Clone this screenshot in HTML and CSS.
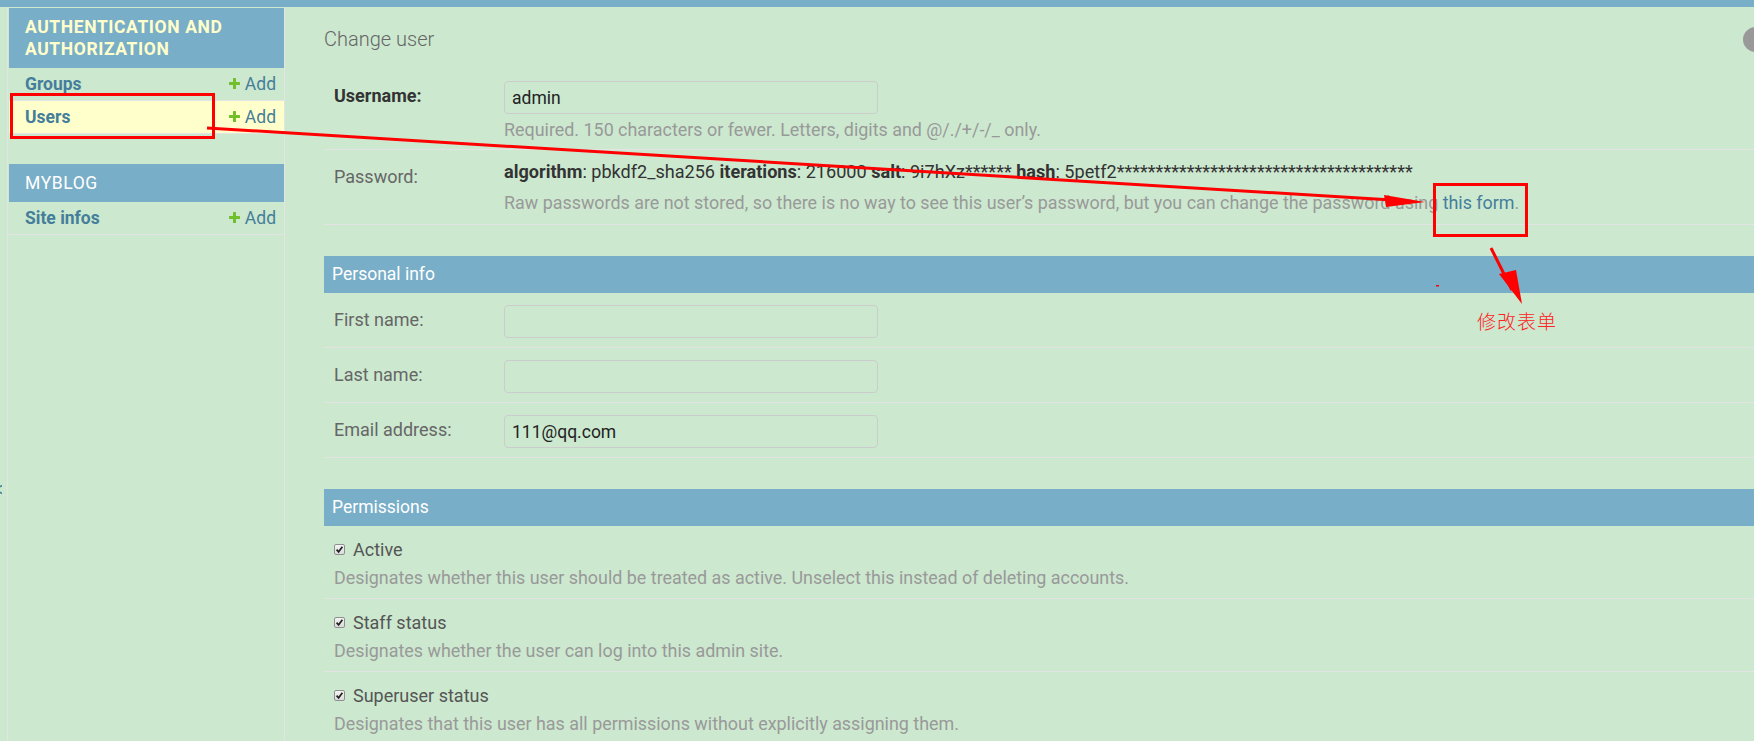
FILE: index.html
```html
<!DOCTYPE html>
<html lang="en">
<head>
    <meta charset="UTF-8">
    <meta name="viewport" content="width=device-width, initial-scale=1.0">
    <title>Change user | Django site admin</title>
    <link rel="stylesheet" href="styles.css">
</head>
<body>
    <div class="topbar"></div>

    <div class="page">
        <div class="sidebar-toggle">
            <svg class="toggle-icon" viewBox="0 0 8 9" width="8" height="9"><path d="M8 0.5 L1 4.5 L8 8.5" fill="none" stroke="#447e9b" stroke-width="1.6"/></svg>
        </div>

        <nav class="nav-sidebar">
            <div class="module current-app">
                <div class="caption">Authentication and Authorization</div>
                <div class="model-row">
                    <a href="#" class="model-link">Groups</a>
                    <a href="#" class="addlink"><svg class="plus" viewBox="0 0 11 11" width="11" height="11"><rect x="4" y="0" width="3" height="11" rx="0.6"/><rect x="0" y="4" width="11" height="3" rx="0.6"/></svg>Add</a>
                </div>
                <div class="model-row current-model">
                    <a href="#" class="model-link">Users</a>
                    <a href="#" class="addlink"><svg class="plus" viewBox="0 0 11 11" width="11" height="11"><rect x="4" y="0" width="3" height="11" rx="0.6"/><rect x="0" y="4" width="11" height="3" rx="0.6"/></svg>Add</a>
                </div>
            </div>

            <div class="module">
                <div class="caption">Myblog</div>
                <div class="model-row">
                    <a href="#" class="model-link">Site infos</a>
                    <a href="#" class="addlink"><svg class="plus" viewBox="0 0 11 11" width="11" height="11"><rect x="4" y="0" width="3" height="11" rx="0.6"/><rect x="0" y="4" width="11" height="3" rx="0.6"/></svg>Add</a>
                </div>
            </div>
        </nav>

        <main class="content">
            <div class="content-head">
                <h1>Change user</h1>
                <a href="#" class="history-link" aria-label="History"></a>
            </div>

            <fieldset class="module">
                <div class="form-row">
                    <label class="required">Username:</label>
                    <div class="field-box">
                        <input type="text" class="text-input" value="admin">
                        <div class="help">Required. 150 characters or fewer. Letters, digits and @/./+/-/_ only.</div>
                    </div>
                </div>
                <div class="form-row password-row">
                    <label>Password:</label>
                    <div class="field-box">
                        <div class="readonly"><strong>algorithm</strong>: pbkdf2_sha256 <strong>iterations</strong>: 216000 <strong>salt</strong>: 9i7hXz****** <strong>hash</strong>: 5petf2**************************************</div>
                        <div class="help">Raw passwords are not stored, so there is no way to see this user’s password, but you can change the password using <a href="#">this form</a>.</div>
                    </div>
                </div>
            </fieldset>

            <fieldset class="module">
                <h2>Personal info</h2>
                <div class="form-row">
                    <label>First name:</label>
                    <div class="field-box"><input type="text" class="text-input" value=""></div>
                </div>
                <div class="form-row">
                    <label>Last name:</label>
                    <div class="field-box"><input type="text" class="text-input" value=""></div>
                </div>
                <div class="form-row">
                    <label>Email address:</label>
                    <div class="field-box"><input type="text" class="text-input" value="111@qq.com"></div>
                </div>
            </fieldset>

            <fieldset class="module">
                <h2>Permissions</h2>
                <div class="form-row check-row">
                    <div class="check-line"><span class="checkbox"><svg viewBox="0 0 9 9" width="9" height="9"><path d="M1.6 4.6 L3.6 6.8 L7.4 1.8" fill="none" stroke="#222" stroke-width="1.7"/></svg></span>Active</div>
                    <div class="help">Designates whether this user should be treated as active. Unselect this instead of deleting accounts.</div>
                </div>
                <div class="form-row check-row">
                    <div class="check-line"><span class="checkbox"><svg viewBox="0 0 9 9" width="9" height="9"><path d="M1.6 4.6 L3.6 6.8 L7.4 1.8" fill="none" stroke="#222" stroke-width="1.7"/></svg></span>Staff status</div>
                    <div class="help">Designates whether the user can log into this admin site.</div>
                </div>
                <div class="form-row check-row">
                    <div class="check-line"><span class="checkbox"><svg viewBox="0 0 9 9" width="9" height="9"><path d="M1.6 4.6 L3.6 6.8 L7.4 1.8" fill="none" stroke="#222" stroke-width="1.7"/></svg></span>Superuser status</div>
                    <div class="help">Designates that this user has all permissions without explicitly assigning them.</div>
                </div>
            </fieldset>
        </main>
    </div>

    <!-- red marks drawn over the screenshot -->
    <svg class="annotations" width="1754" height="741" viewBox="0 0 1754 741">
        <rect x="11.5" y="94.5" width="202" height="43" fill="none" stroke="#f00" stroke-width="3"/>
        <line x1="207" y1="128" x2="1392" y2="200" stroke="#f00" stroke-width="3"/>
        <polygon points="1384,195 1425,202 1386,207" fill="#f00"/>
        <rect x="1434.5" y="184.5" width="92" height="51" fill="none" stroke="#f00" stroke-width="3"/>
        <line x1="1491" y1="248" x2="1512" y2="290" stroke="#f00" stroke-width="3"/>
        <polygon points="1499,274 1516,270 1522,304" fill="#f00"/>
        <rect x="1436" y="285" width="3" height="1.5" fill="#f00"/>
    </svg>
    <div class="annotation-note">修改表单</div>
</body>
</html>
```

FILE: styles.css
```css
:root {
    --primary: #79aec8;
    --body-bg: #cce8cf; /* fond vert "protection des yeux" */
    --link: #447e9b;
    --hairline: #e4e4e4;
    --quiet: #999;
    --label: #666;
    --text: #333;
    --selected-row: #ffc;
    --header-color: #ffc;
    --add-green: #70bf2b;
    --mark: #f00;
}

* {
    box-sizing: border-box;
}

html, body {
    margin: 0;
    padding: 0;
}

body {
    position: relative;
    height: 741px;
    overflow: hidden;
    background-color: var(--body-bg);
    font-family: Roboto, "Liberation Sans", sans-serif;
    color: var(--text);
}

a {
    color: var(--link);
    text-decoration: none;
}

.topbar {
    height: 7px;
    background-color: var(--primary);
}

.page {
    display: flex;
    min-height: 734px;
}

/* bouton de repli, presque hors cadre */
.sidebar-toggle {
    width: 8px;
    flex-shrink: 0;
    border-right: 1px solid var(--hairline);
    overflow: hidden;
}

.toggle-icon {
    display: block;
    margin: 478px 0 0 -6px;
}

.nav-sidebar {
    width: 277px;
    flex-shrink: 0;
    padding: 1px 0 0 1px;
    border-right: 1px solid var(--hairline);
}

.nav-sidebar .module {
    margin-bottom: 30px;
}

.caption {
    background-color: var(--primary);
    color: #fff;
    padding: 8px 16px;
    font-size: 17.5px;
    line-height: 22px;
    letter-spacing: 0.6px;
    text-transform: uppercase;
}

.current-app .caption {
    color: var(--header-color);
    font-weight: 700;
}

.model-row {
    display: flex;
    justify-content: space-between;
    align-items: center;
    padding: 6px 8px 5px 16px;
    line-height: 21px;
    font-size: 17.5px;
    border-bottom: 1px solid var(--hairline);
}

.current-model {
    background-color: var(--selected-row);
}

.model-link {
    font-weight: 700;
}

.addlink {
    display: flex;
    align-items: center;
    gap: 5px;
}

.plus {
    fill: var(--add-green);
    margin-top: -3px;
}

.content {
    flex: 1;
    min-width: 0;
    padding: 20px 0 0 39px;
}

.content-head {
    display: flex;
    justify-content: space-between;
    align-items: center;
    margin-bottom: 17px;
}

h1 {
    margin: 0;
    font-size: 20px;
    font-weight: 300;
    line-height: 25px;
    color: var(--label);
}

.history-link {
    width: 95px;
    height: 25px;
    margin-right: -84px;
    border-radius: 13px;
    background-color: var(--quiet);
}

fieldset.module {
    border: none;
    margin: 0 0 31px;
    padding: 0;
    min-width: 0;
}

fieldset.module h2 {
    margin: 0;
    padding: 8px;
    background-color: var(--primary);
    color: #fff;
    font-size: 17.5px;
    font-weight: 400;
    line-height: 21px;
}

.form-row {
    display: flex;
    padding: 12px 10px 9px;
    border-bottom: 1px solid var(--hairline);
}

.form-row.password-row {
    padding-bottom: 11px;
}

.form-row label {
    width: 170px;
    flex-shrink: 0;
    padding: 5px 10px 0 0;
    font-size: 18px;
    line-height: 20px;
    color: var(--label);
}

.form-row label.required {
    font-weight: 700;
    color: var(--text);
}

.field-box {
    display: flex;
    flex-direction: column;
}

.text-input {
    width: 374px;
    height: 33px;
    padding: 2px 7px;
    border: 1px solid #ccc;
    border-radius: 4px;
    background: transparent;
    font-family: inherit;
    font-size: 17.5px;
    color: #222;
}

.help {
    margin-top: 5px;
    font-size: 17.9px;
    line-height: 21px;
    color: var(--quiet);
    white-space: nowrap;
}

.readonly {
    font-size: 18.1px;
    line-height: 20px;
    color: var(--text);
    white-space: nowrap;
}

.readonly + .help {
    margin-top: 10px;
}

.check-row {
    flex-direction: column;
    padding: 12px 10px 10px;
}

.check-line {
    display: flex;
    align-items: center;
    gap: 8px;
    font-size: 18px;
    line-height: 23px;
    color: #555;
}

.checkbox {
    width: 11px;
    height: 11px;
    display: flex;
    align-items: center;
    justify-content: center;
    border: 1px solid #8f8f8f;
    border-radius: 2px;
    background: linear-gradient(#f4f4f4, #dcdcdc);
}

.check-row .help {
    margin-top: 6px;
}

/* annotations rouges par-dessus la capture */
.annotations {
    position: absolute;
    top: 0;
    left: 0;
    pointer-events: none;
}

.annotation-note {
    position: absolute;
    left: 1477px;
    top: 307px;
    font-family: "Noto Sans CJK SC", sans-serif;
    font-size: 19px;
    font-weight: 300;
    color: #f22;
    letter-spacing: 1px;
}
```
